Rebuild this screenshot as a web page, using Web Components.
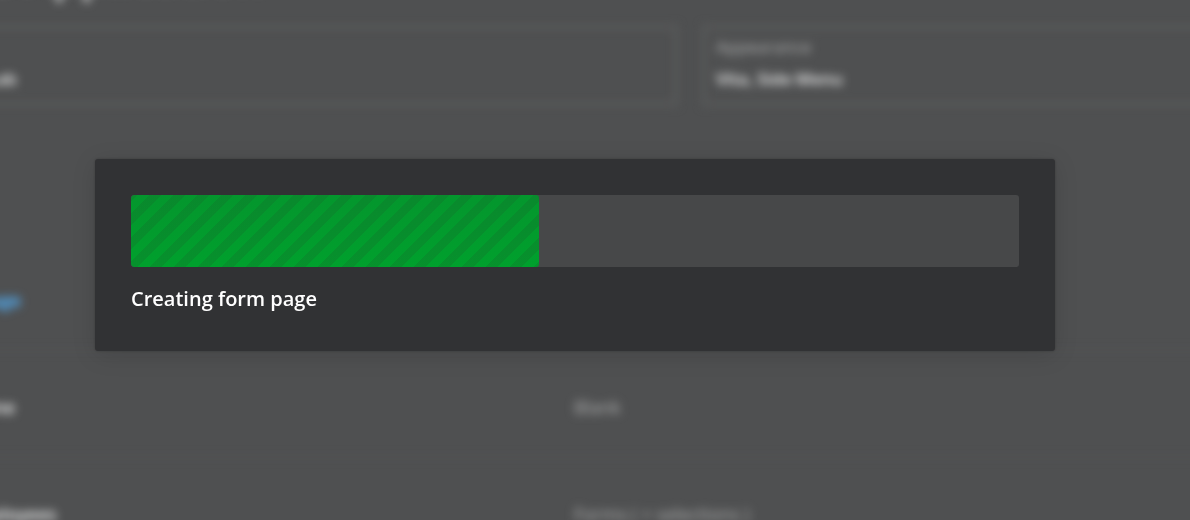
<!DOCTYPE html>
<html lang="en">
<head>
<meta charset="utf-8">
<title>Create Application</title>
<style>
html, body { height: 100%; margin: 0; }
body { background: #4f5051; color: #fff; font-family: "Open Sans", "Noto Sans", sans-serif; overflow: hidden; }
</style>
</head>
<body>
<app-backdrop>
  <page-heading>Create Application</page-heading>
  <card-pair>
    <info-card with-icon><span slot="value">Lab</span></info-card>
    <info-card><span slot="label">Appearance</span><span slot="value">Vita, Side Menu</span></info-card>
  </card-pair>
  <page-row><a href="#add">+ Page</a></page-row>
  <page-row><b>Home</b><span slot="detail">Blank</span></page-row>
  <page-row><b>Employees</b><span slot="detail">Forms ( + selections )</span></page-row>
</app-backdrop>
<modal-layer>
  <progress-dialog value="408" max="888">Creating form page</progress-dialog>
</modal-layer>
<script>
class Base extends HTMLElement {
  constructor() {
    super();
    this.attachShadow({ mode: "open" }).innerHTML = this.constructor.markup;
  }
}
customElements.define("app-backdrop", class extends Base {
  static markup = `<style>
    :host { display: block; height: 100%; overflow: hidden; }
    .page { margin-left: -160px; width: calc(100% + 510px); filter: blur(5px); }
  </style><div class="page"><slot></slot></div>`;
});
customElements.define("page-heading", class extends Base {
  static markup = `<style>
    :host { display: flex; align-items: flex-end; box-sizing: border-box; height: 25px; padding: 0 0 23px 32px; }
    h1 { margin: 0; font-size: 44px; line-height: 54px; font-weight: 600; color: #d4d5d5; }
  </style><h1><slot></slot></h1>`;
});
customElements.define("card-pair", class extends Base {
  static markup = `<style>
    :host { display: grid; grid-template-columns: 1fr 1fr; gap: 24px; margin-bottom: 138px; }
  </style><slot></slot>`;
});
customElements.define("info-card", class extends Base {
  static markup = `<style>
    :host { display: flex; flex-direction: column; box-sizing: border-box; height: 81px; padding: 2px 10px; border: 4px solid #5a5b5b; font-size: 17px; line-height: 32px; }
    :host([with-icon]) { padding-left: 143px; }
    .label { min-height: 32px; color: #b0b1b1; }
    .value { color: #f4f5f5; font-weight: 600; }
  </style><div class="label"><slot name="label"></slot></div><div class="value"><slot name="value"></slot></div>`;
});
customElements.define("page-row", class extends Base {
  static markup = `<style>
    :host { display: flex; box-sizing: border-box; height: 107px; padding-top: 40px; border-bottom: 2px solid #545556; font-size: 18px; line-height: 32px; }
    .name { box-sizing: border-box; width: 734px; padding-left: 123px; }
    .name ::slotted(*) { color: #f4f5f5; font-weight: 600; }
    .name ::slotted(a) { color: #52b4ff; font-weight: 700; text-decoration: none; }
    .detail { color: #b0b1b1; }
  </style><div class="name"><slot></slot></div><div class="detail"><slot name="detail"></slot></div>`;
});
customElements.define("modal-layer", class extends Base {
  static markup = `<style>
    :host { position: fixed; inset: 0; display: flex; align-items: center; padding: 0 135px 10px 95px; }
  </style><slot></slot>`;
});
customElements.define("progress-dialog", class extends Base {
  static markup = `<style>
    :host { display: block; flex: 1; padding: 36px 36px 38px; border-radius: 3px; background: #313234; box-shadow: 0 4px 24px rgba(0,0,0,.12), 0 0 3px rgba(0,0,0,.25); }
    progress { display: block; appearance: none; width: 100%; height: 72px; border: 0; border-radius: 3px; overflow: hidden; background: #474849; }
    progress::-webkit-progress-bar { background: #474849; }
    progress::-webkit-progress-value { border-radius: 3px; background:
      linear-gradient(-45deg, rgba(20,110,45,.3) 25%, transparent 25%, transparent 50%, rgba(20,110,45,.3) 50%, rgba(20,110,45,.3) 75%, transparent 75%) 6px 0 / 24px 24px,
      linear-gradient(#04962d, #00a02d); }
    label { display: block; margin-top: 18px; font-size: 20px; line-height: 28px; font-weight: 600; }
  </style><progress id="bar"></progress><label for="bar"><slot></slot></label>`;
  connectedCallback() {
    const bar = this.shadowRoot.querySelector("progress");
    bar.max = Number(this.getAttribute("max"));
    bar.value = Number(this.getAttribute("value"));
  }
});
</script>
</body>
</html>
